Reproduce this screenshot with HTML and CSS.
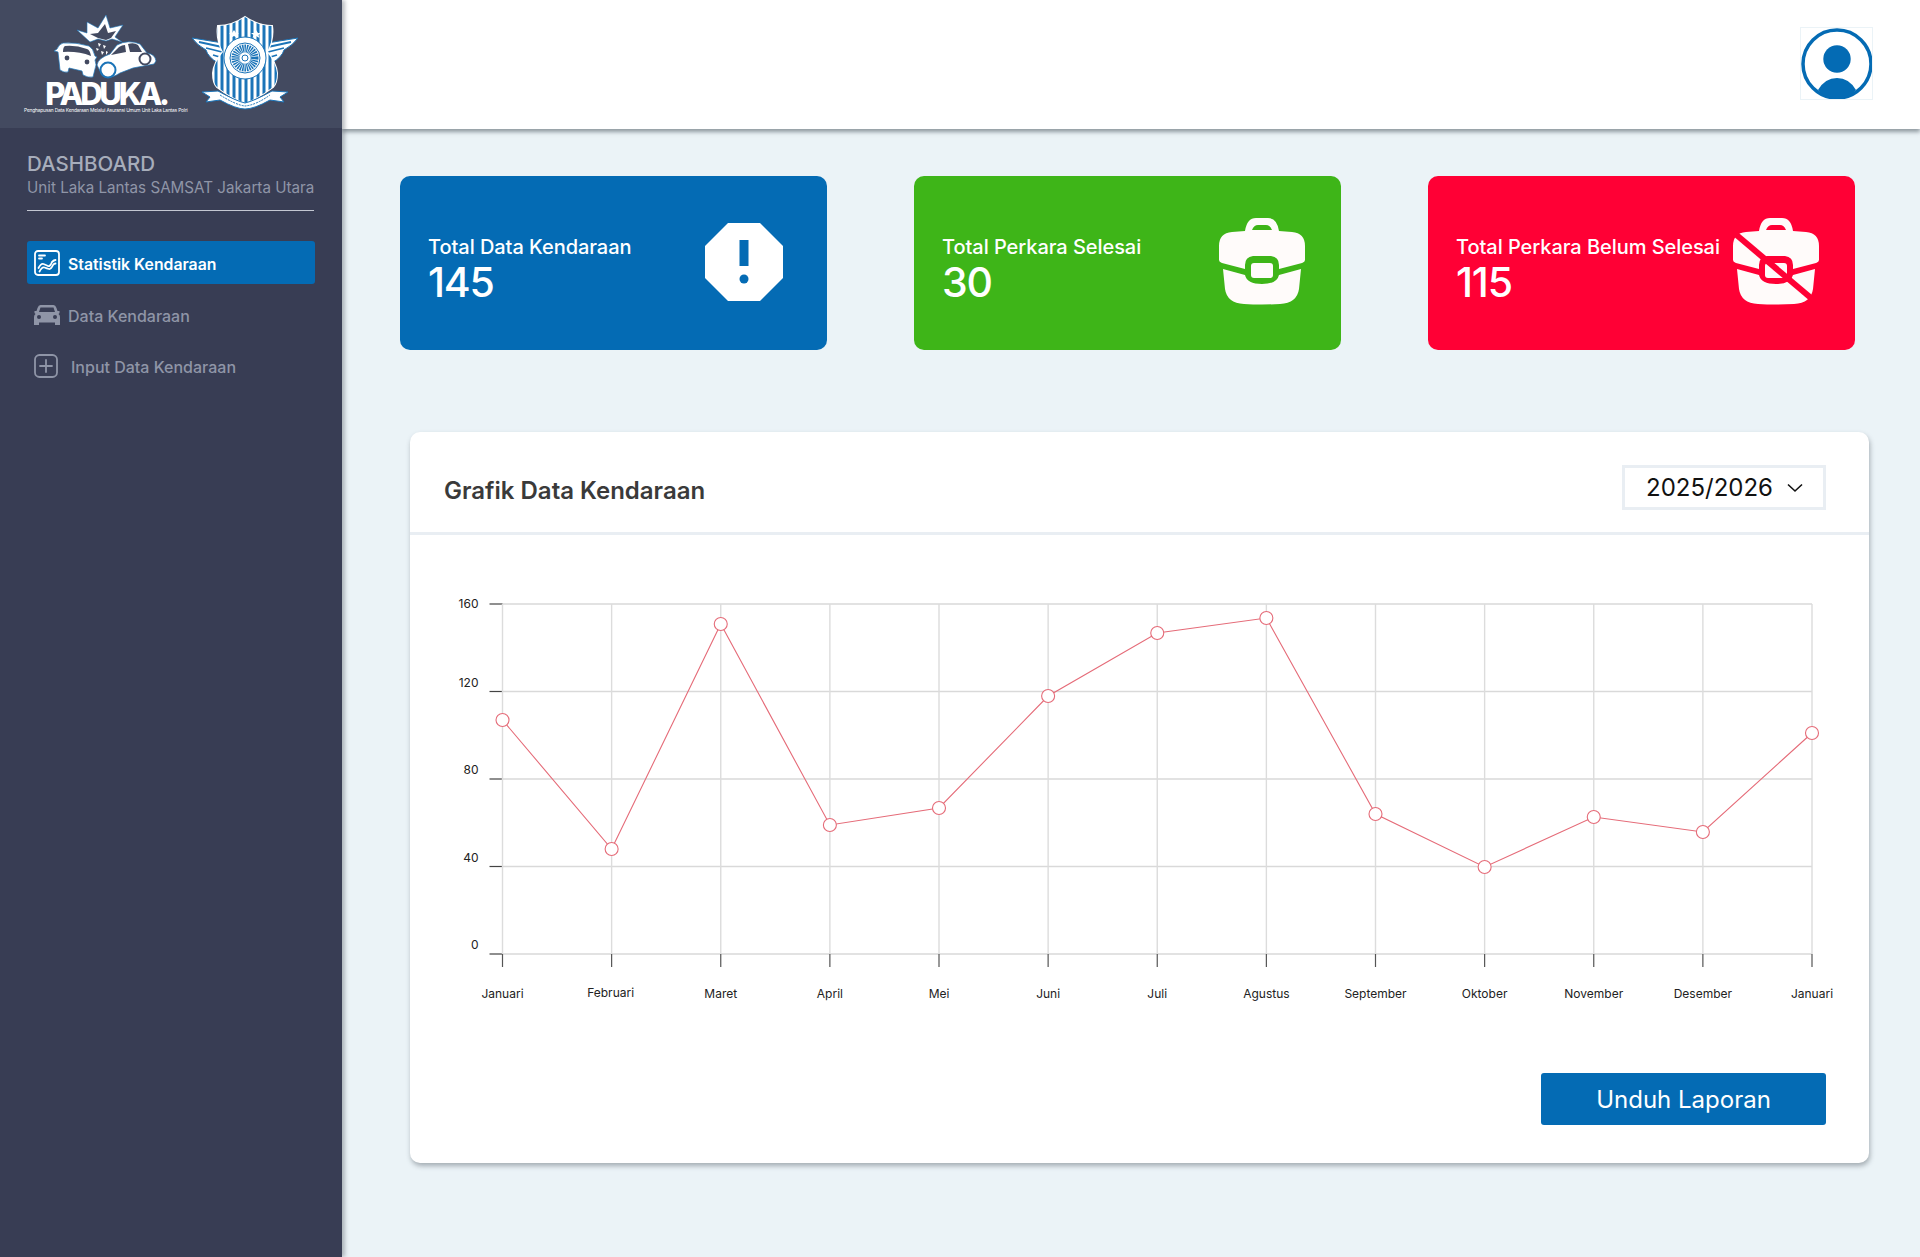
FILE: index.html
```html
<!DOCTYPE html>
<html lang="en">
<head>
    <meta charset="UTF-8">
    <title>PADUKA Dashboard</title>
    <link rel="stylesheet" href="styles.css">
</head>
<body>
    <aside class="sidebar">
        <div class="brand">
            <svg class="logo-paduka" width="172" height="106" viewBox="0 0 172 106">
                <!-- burst -->
                <path d="M57 21 L67 24 L67 13 L78 19 L86 6 L90 19 L103 16 L95 28 L102 33 L92 30 L86 32 L78 30 L70 33 Z" fill="#fff" stroke="#1b74b8" stroke-width=".6"/>
                <path d="M70 25 L78 24 L85 15 L88 24 L96 22 L91 29 L86 31 L78 29 Z" fill="#434a60"/>
                <path d="M78 34 l3 1 -2 3z M83 36 l3 1 -2 3z M76 39 l3 1 -2 2z M81 42 l3 1 -2 3z M86 42 l2 1 -2 3z" fill="#fff"/>
                <!-- left car -->
                <path d="M43 34 Q56 33 69 37 Q73 39 75 47 L77 48 L75 51 Q77 56 75 60 L73 68 Q68 69 63 66 L62 62 L49 59 L48 63 Q44 64 40 61 L39 52 L38 43 L34 42 L37 40 Q39 35 43 34 Z" fill="#fff" stroke="#1b74b8" stroke-width=".7"/>
                <path d="M45 37 Q56 36 67 40 Q70 41 71 47 Q58 42 43 43 Q43 38 45 37 Z" fill="#434a60"/>
                <circle cx="47" cy="49" r="2.400" fill="#434a60"/>
                <circle cx="67" cy="53" r="2.400" fill="#434a60"/>
                <!-- right car -->
                <path d="M77 56 Q78 49 90 45 L97 36 Q108 30 120 35 L127 44 Q135 45 136 52 L134 55 L113 59 L100 64 Q90 71 82 66 Z" fill="#fff" stroke="#1b74b8" stroke-width=".7"/>
                <path d="M91 46 L99 38 Q102 36 105 36 L106 43 Z M108 35 Q114 33 118 36 L122 43 L110 43 Z" fill="#434a60"/>
                <circle cx="88" cy="61" r="7.500" fill="#fff" stroke="#1b74b8" stroke-width="2"/>
                <circle cx="125" cy="50" r="5.500" fill="#fff" stroke="#434a60" stroke-width="2"/>
                <text class="logo-name" x="86" y="96" text-anchor="middle">PADUKA.</text>
            </svg>
            <svg class="logo-polri" width="110" height="98" viewBox="0 0 110 98">
                <defs>
                    <clipPath id="shieldClip">
                        <path d="M55 2 Q42 11 28 11 Q26 24 33 37 Q24 48 23 58 Q23 68 27 72 Q40 82 55 88 Q70 82 83 72 Q87 68 87 58 Q86 48 77 37 Q84 24 82 11 Q68 11 55 2 Z"/>
                    </clipPath>
                </defs>
                <!-- wings -->
                <path d="M2 23 L33 28 L34 50 L28 48 Q18 42 16 35 Q7 30 2 23 Z" fill="#fff" stroke="#1b74b8"/>
                <path d="M108 23 L77 28 L76 50 L82 48 Q92 42 94 35 Q103 30 108 23 Z" fill="#fff" stroke="#1b74b8"/>
                <path d="M9 27 L32 32 M16 33 L32 37 M23 40 L33 43 M101 27 L78 32 M94 33 L78 37 M87 40 L77 43" stroke="#1b74b8" stroke-width="1.800" fill="none"/>
                <!-- shield -->
                <path d="M55 2 Q42 11 28 11 Q26 24 33 37 Q24 48 23 58 Q23 68 27 72 Q40 82 55 88 Q70 82 83 72 Q87 68 87 58 Q86 48 77 37 Q84 24 82 11 Q68 11 55 2 Z" fill="#fff" stroke="#fff" stroke-width="2"/>
                <g clip-path="url(#shieldClip)">
                    <path d="M26 0 V90 M32 0 V90 M38 0 V90 M44 0 V90 M50 0 V90 M56 0 V90 M62 0 V90 M68 0 V90 M74 0 V90 M80 0 V90 M86 0 V90" stroke="#1b74b8" stroke-width="3" fill="none"/>
                </g>
                <path d="M44 15 l2 3 h3 l-2.500 2 1 3 -3.500-2 -3.500 2 1-3 -2.500-2 h3z M66 15 l2 3 h3 l-2.500 2 1 3 -3.500-2 -3.500 2 1-3 -2.500-2 h3z" fill="#fff"/>
                <!-- wheel -->
                <circle cx="55" cy="43" r="21" fill="#fff" stroke="#1b74b8"/>
                <circle cx="55" cy="43" r="15" fill="#fff" stroke="#1b74b8"/>
                <circle cx="55" cy="43" r="9.500" fill="none" stroke="#1b74b8" stroke-width="8" stroke-dasharray="1.300 .7"/>
                <circle cx="55" cy="43" r="3" fill="#fff" stroke="#1b74b8"/>
                <!-- ribbon -->
                <path d="M12 77 L28 76 Q46 86 55 88 Q64 86 82 76 L98 77 L90 82 L94 87 L80 85 Q64 94 55 94 Q46 94 30 85 L16 87 L20 82 Z" fill="#fff" stroke="#1b74b8"/>
                <path d="M30 80 Q46 90 55 91 Q66 90 80 80" stroke="#1b74b8" stroke-width="1" stroke-dasharray="2 1" fill="none"/>
            </svg>
            <span class="logo-tagline">Penghapusan Data Kendaraan Melalui Asuransi Umum Unit Laka Lantas Polri</span>
        </div>
        <div class="side-title">
            <h2>DASHBOARD</h2>
            <p>Unit Laka Lantas SAMSAT Jakarta Utara</p>
        </div>
        <nav class="side-nav">
            <a class="nav-item active">
                <svg width="26" height="26" viewBox="0 0 26 26" fill="none" stroke="currentColor" stroke-width="1.800" stroke-linecap="round">
                    <rect x="1" y="1" width="24" height="24" rx="3"/>
                    <path d="M5 5.500 H11 M5 8.500 H8"/>
                    <path d="M4.500 18 Q7 13 9.500 14 T14 16 T18 12 Q20 10 21.500 10 M5.500 21.500 Q8 16.500 10.500 17.500 T15 19 T19 15 Q20 13.500 21.500 13.500"/>
                </svg>
                <span>Statistik Kendaraan</span>
            </a>
            <a class="nav-item">
                <svg width="26" height="22" viewBox="0 0 26 22" fill="currentColor">
                    <path d="M6.500 1 H19.500 Q21.500 1 22.500 4 L23.500 7 H25.500 V9 L24.500 10 Q26 11 26 13 V21 H21 V18.500 H5 V21 H0 V13 Q0 11 1.500 10 L.5 9 V7 H2.500 L3.500 4 Q4.500 1 6.500 1 Z M6.500 3.500 L5 8 H21 L19.500 3.500 Z"/>
                    <circle cx="5" cy="13" r="2" fill="#383d54"/>
                    <circle cx="21" cy="13" r="2" fill="#383d54"/>
                </svg>
                <span>Data Kendaraan</span>
            </a>
            <a class="nav-item add">
                <svg width="24" height="24" viewBox="0 0 24 24" fill="none" stroke="currentColor" stroke-width="1.800" stroke-linecap="round">
                    <rect x="1" y="1" width="22" height="22" rx="4.500"/>
                    <path d="M12 6 V18 M6 12 H18"/>
                </svg>
                <span>Input Data Kendaraan</span>
            </a>
        </nav>
    </aside>

    <div class="main">
        <header class="topbar">
            <div class="avatar">
                <svg width="72" height="72" viewBox="0 0 72 72">
                    <defs>
                        <clipPath id="avatarClip"><circle cx="36" cy="36" r="35"/></clipPath>
                    </defs>
                    <circle cx="36" cy="36" r="34" fill="#fff" stroke="#046bb4" stroke-width="3.500"/>
                    <circle cx="36" cy="31" r="13.700" fill="#046bb4"/>
                    <path d="M17 62 Q24 50 36 50 Q48 50 55 62 Q46 72 36 72 Q26 72 17 62 Z" fill="#046bb4" clip-path="url(#avatarClip)"/>
                </svg>
            </div>
        </header>

        <section class="cards">
            <div class="stat-card blue">
                <div class="stat-text">
                    <div class="stat-label">Total Data Kendaraan</div>
                    <div class="stat-value">145</div>
                </div>
                <svg class="stat-icon" width="78" height="78" viewBox="0 0 78 78">
                    <path d="M23 0 H55 L78 23 V55 L55 78 H23 L0 55 V23 Z" fill="#fff"/>
                    <rect x="34.500" y="17" width="9" height="26" fill="#046bb4"/>
                    <circle cx="39" cy="56" r="4.500" fill="#046bb4"/>
                </svg>
            </div>
            <div class="stat-card green">
                <div class="stat-text">
                    <div class="stat-label">Total Perkara Selesai</div>
                    <div class="stat-value">30</div>
                </div>
                <svg class="stat-icon case" width="88" height="87" viewBox="0 0 88 87">
                    <path fill="#fffbfa" d="M27 13 Q29 0 38 0 H50 Q59 0 61 13 L74 14 Q87 15 87 28 V42 Q87 44 84 45 L61 51 V47 Q61 39 53 38 H35 Q27 39 27 47 V51 L4 45 Q1 44 1 42 V28 Q1 15 14 14 Z M34 12 H54 Q52 7 48 7 H40 Q36 7 34 12 Z"/>
                    <path fill="#fffbfa" d="M5 51 L27 57 Q29 66 44 66 Q59 66 61 57 L83 51 L81 71 Q79 85 62 86 Q44 87 26 86 Q9 85 7 71 Z"/>
                    <rect x="33" y="45" width="22" height="15" rx="3" fill="#fffbfa"/>
                </svg>
            </div>
            <div class="stat-card red">
                <div class="stat-text">
                    <div class="stat-label">Total Perkara Belum Selesai</div>
                    <div class="stat-value">115</div>
                </div>
                <svg class="stat-icon case" width="88" height="87" viewBox="0 0 88 87">
                    <path fill="#fffbfa" d="M27 13 Q29 0 38 0 H50 Q59 0 61 13 L74 14 Q87 15 87 28 V42 Q87 44 84 45 L61 51 V47 Q61 39 53 38 H35 Q27 39 27 47 V51 L4 45 Q1 44 1 42 V28 Q1 15 14 14 Z M34 12 H54 Q52 7 48 7 H40 Q36 7 34 12 Z"/>
                    <path fill="#fffbfa" d="M5 51 L27 57 Q29 66 44 66 Q59 66 61 57 L83 51 L81 71 Q79 85 62 86 Q44 87 26 86 Q9 85 7 71 Z"/>
                    <rect x="33" y="45" width="22" height="15" rx="3" fill="#fffbfa"/>
                    <path d="M1 14 L79 80" stroke="#ff0035" stroke-width="6" fill="none"/>
                </svg>
            </div>
        </section>

        <section class="chart-card">
            <div class="chart-head">
                <h3>Grafik Data Kendaraan</h3>
                <div class="year-select">
                    <span>2025/2026</span>
                    <svg width="16" height="10" viewBox="0 0 16 10" fill="none" stroke="#111" stroke-width="1.600"><path d="M1 1.500 L8 8 L15 1.500"/></svg>
                </div>
            </div>
            <svg class="chart" id="chart" width="1459" height="490" viewBox="0 0 1459 490"></svg>
            <div class="chart-foot">
                <button class="download">Unduh Laporan</button>
            </div>
        </section>
    </div>

    <script src="chart.js"></script>
</body>
</html>
```

FILE: styles.css
```css
* {
    box-sizing: border-box;
}

body {
    margin: 0;
    height: 1257px;
    display: flex;
    overflow: hidden;
    background-color: #ebf3f7;
    font-family: "Inter", "Liberation Sans", sans-serif;
}

/* sidebar */
.sidebar {
    width: 342px;
    flex-shrink: 0;
    background-color: #383d54;
    box-shadow: 3px 0 4px rgba(60, 70, 80, 0.35);
    position: relative;
    z-index: 2;
}

.brand {
    height: 128px;
    background-color: #434a60;
    position: relative;
    display: flex;
    align-items: flex-start;
    padding: 9px 0 0 20px;
}

.logo-polri {
    margin: 6px 0 0 -2px;
}

.logo-name {
    font-family: "Inter", sans-serif;
    font-weight: 800;
    font-size: 31px;
    letter-spacing: -3.200px;
    fill: #fff;
}

.logo-tagline {
    position: absolute;
    left: 24px;
    top: 107px;
    font-size: 4.800px;
    line-height: 6px;
    letter-spacing: -0.14px;
    color: #fff;
    white-space: nowrap;
}

.side-title {
    margin: 22px 28px 0 27px;
    padding-bottom: 11px;
    border-bottom: 1px solid #c3c7d2;
}

.side-title h2 {
    margin: 0;
    font-size: 20.500px;
    line-height: 27px;
    font-weight: 500;
    color: #a7adbb;
}

.side-title p {
    margin: 0;
    font-size: 15.200px;
    line-height: 22px;
    font-weight: 400;
    color: #8f95a7;
    white-space: nowrap;
}

.side-nav {
    margin: 30px 27px 0 27px;
    display: flex;
    flex-direction: column;
    gap: 9px;
}

.nav-item {
    height: 43px;
    display: flex;
    align-items: center;
    gap: 8px;
    padding-left: 7px;
    border-radius: 3px;
    font-size: 16px;
    font-weight: 500;
    color: #8f95a7;
    white-space: nowrap;
}

.nav-item span {
    padding-top: 3px;
}

.nav-item.active {
    background-color: #046bb4;
    color: #fff;
    font-size: 15.800px;
    font-weight: 600;
}

.nav-item.add {
    gap: 13px;
    margin-top: -1px;
}

/* main column */
.main {
    flex: 1;
    min-width: 0;
    display: flex;
    flex-direction: column;
}

.topbar {
    height: 129px;
    flex-shrink: 0;
    background-color: #fff;
    box-shadow: 0 3px 4px rgba(70, 80, 90, 0.55);
    display: flex;
    justify-content: flex-end;
    align-items: flex-start;
    padding: 27px 47px 0 0;
}

.avatar {
    width: 73px;
    height: 73px;
    border: 1px solid #ebf3f7;
    overflow: hidden;
}

.avatar svg {
    display: block;
}

.cards {
    display: flex;
    gap: 87px;
    margin: 47px 0 0 58px;
}

.stat-card {
    width: 427px;
    height: 174px;
    border-radius: 10px;
    color: #fff;
    display: flex;
    align-items: center;
    justify-content: space-between;
    padding: 0 44px 0 28px;
}

.stat-card.blue {
    background-color: #046bb4;
}

.stat-card.green {
    background-color: #3eb518;
    padding-right: 35px;
}

.stat-card.red {
    background-color: #ff0035;
    padding-right: 35px;
}

.stat-text {
    padding-top: 12px;
}

.stat-label {
    font-size: 20px;
    line-height: 26px;
    font-weight: 500;
    letter-spacing: -0.05px;
    white-space: nowrap;
}

.stat-value {
    font-size: 41px;
    line-height: 45px;
    font-weight: 500;
    letter-spacing: -1.200px;
}

.stat-icon {
    flex-shrink: 0;
    margin-top: -2px;
}

.stat-icon.case {
    margin-top: -4px;
}

/* chart */
.chart-card {
    width: 1459px;
    height: 731px;
    margin: 82px 0 0 68px;
    background-color: #fff;
    border-radius: 10px;
    box-shadow: 1px 3px 5px rgba(60, 70, 80, 0.4);
}

.chart-head {
    height: 103px;
    border-bottom: 3px solid #e9eef3;
    display: flex;
    align-items: flex-start;
    justify-content: space-between;
    padding: 33px 43px 0 34px;
}

.chart-head h3 {
    margin: 0;
    padding-top: 11px;
    font-size: 24px;
    line-height: 30px;
    font-weight: 600;
    color: #3a3a3a;
}

.year-select {
    width: 204px;
    height: 45px;
    border: 3px solid #e9eef3;
    display: flex;
    align-items: center;
    gap: 14px;
    padding-left: 21px;
    font-size: 24px;
    color: #111;
}

.chart {
    display: block;
}

.chart text {
    font-family: "Inter", sans-serif;
    font-size: 12px;
    fill: #222;
}

.chart-foot {
    display: flex;
    justify-content: flex-end;
    padding: 48px 43px 0 0;
}

.download {
    width: 285px;
    height: 52px;
    border: none;
    border-radius: 3px;
    background-color: #046bb4;
    color: #fff;
    font-family: inherit;
    font-size: 24px;
    font-weight: 400;
}
```

FILE: chart.js
```js
// draw the line chart into the svg, coords are relative to the svg box
const svg = document.getElementById("chart");
const NS = "http://www.w3.org/2000/svg";

const months = ["Januari", "Februari", "Maret", "April", "Mei", "Juni", "Juli", "Agustus", "September", "Oktober", "November", "Desember", "Januari"];
const yLabels = ["160", "120", "80", "40", "0"];
// point heights in page pixels
const pageY = [720, 849, 624, 825, 808, 696, 633, 618, 814, 867, 817, 832, 733];

const offsetX = 410;
const offsetY = 535;
const left = 502.5 - offsetX;
const right = 1812 - offsetX;
const top_ = 604 - offsetY;
const bottom = 954 - offsetY;
const stepX = (right - left) / 12;
const stepY = (bottom - top_) / 4;

function add(tag, attrs, text) {
    const el = document.createElementNS(NS, tag);
    for (const key in attrs) el.setAttribute(key, attrs[key]);
    if (text) el.textContent = text;
    svg.appendChild(el);
    return el;
}

function line(x1, y1, x2, y2, color, width) {
    add("line", { x1, y1, x2, y2, stroke: color, "stroke-width": width });
}

for (let i = 0; i < 5; i++) {
    const y = top_ + stepY * i;
    line(left, y, right, y, "#d9d9d9", 1.4);
    line(left - 13, y, left, y, "#444", 1.2);
    add("text", { x: left - 24, y: i === 0 ? y + 4 : y - 5, "text-anchor": "end" }, yLabels[i]);
}

for (let i = 0; i < 13; i++) {
    const x = left + stepX * i;
    line(x, top_, x, bottom, "#dcdcdc", 1.4);
    line(x, bottom, x, bottom + 13, "#555", 1.2);
    // Februari sits a bit off in the design
    const labelX = i === 1 ? x - 1 : x;
    const labelY = i === 1 ? bottom + 43 : bottom + 44;
    add("text", { x: labelX, y: labelY, "text-anchor": "middle" }, months[i]);
}

const points = pageY.map((y, i) => [left + stepX * i, y - offsetY]);
add("polyline", { points: points.map(p => p.join(",")).join(" "), fill: "none", stroke: "#e56b78", "stroke-width": 1.1 });
points.forEach(p => add("circle", { cx: p[0], cy: p[1], r: 6.5, fill: "#fff", stroke: "#e56b78", "stroke-width": 1.1 }));
```
